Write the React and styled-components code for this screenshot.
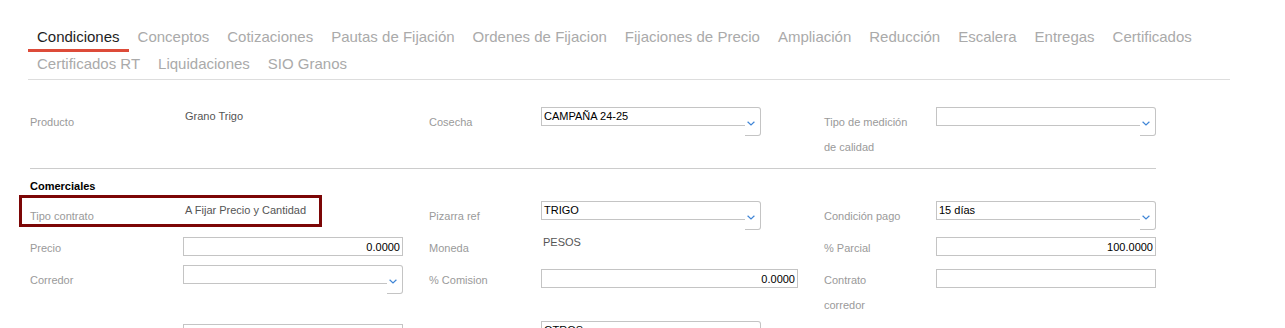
import React from 'react'
import styled, { createGlobalStyle } from 'styled-components'

const GlobalStyle = createGlobalStyle`
  body {
    margin: 0;
    background: #fff;
    font-family: 'Liberation Sans', Arial, sans-serif;
  }
`

const tabs = [
  'Condiciones',
  'Conceptos',
  'Cotizaciones',
  'Pautas de Fijación',
  'Ordenes de Fijacion',
  'Fijaciones de Precio',
  'Ampliación',
  'Reducción',
  'Escalera',
  'Entregas',
  'Certificados',
  'Certificados RT',
  'Liquidaciones',
  'SIO Granos',
]

const Chevron = () => (
  <svg width="8" height="5" viewBox="0 0 8 5">
    <polyline points="0.6,0.8 4,4 7.4,0.8" fill="none" stroke="#3f85d6" strokeWidth="1.2" />
  </svg>
)

const Select = ({ value }) => (
  <SelectBox>
    <SelectValue>{value}</SelectValue>
    <SelectArrow>
      <Chevron />
    </SelectArrow>
  </SelectBox>
)

const App = () => (
  <Page>
    <GlobalStyle />
    <TabBar>
      {tabs.map((t, i) => (
        <Tab key={t} $active={i === 0}>
          {t}
        </Tab>
      ))}
    </TabBar>

    <Form>
      <Row>
        <Label>Producto</Label>
        <Value>Grano Trigo</Value>
        <Label>Cosecha</Label>
        <Field>
          <Select value="CAMPAÑA 24-25" />
        </Field>
        <Label>
          Tipo de medición
          <br />
          de calidad
        </Label>
        <Field>
          <Select value="" />
        </Field>
      </Row>

      <Divider />
      <SectionTitle>Comerciales</SectionTitle>

      <Row>
        <Highlight />
        <Label>Tipo contrato</Label>
        <Value>A Fijar Precio y Cantidad</Value>
        <Label>Pizarra ref</Label>
        <Field>
          <Select value="TRIGO" />
        </Field>
        <Label>Condición pago</Label>
        <Field>
          <Select value="15 días" />
        </Field>
      </Row>

      <Row>
        <Label>Precio</Label>
        <Field>
          <TextInput readOnly value="0.0000" $align="right" />
        </Field>
        <Label>Moneda</Label>
        <Value>PESOS</Value>
        <Label>% Parcial</Label>
        <Field>
          <TextInput readOnly value="100.0000" $align="right" />
        </Field>
      </Row>

      <Row>
        <Label>Corredor</Label>
        <Field>
          <Select value="" />
        </Field>
        <Label>% Comision</Label>
        <Field>
          <TextInput readOnly value="0.0000" $align="right" $width={257} />
        </Field>
        <Label>
          Contrato
          <br />
          corredor
        </Label>
        <Field>
          <TextInput readOnly value="" />
        </Field>
      </Row>

      <Row>
        <Label />
        <Field>
          <TextInput readOnly value="" $top={3} />
        </Field>
        <Label />
        <Field>
          <Select value="OTROS" />
        </Field>
        <Label />
        <Field />
      </Row>
    </Form>
  </Page>
)

const Page = styled.div`
  padding-top: 25px;
  width: 1285px;
`

const TabBar = styled.nav`
  display: flex;
  flex-wrap: wrap;
  width: 1202px;
  margin-left: 28px;
  border-bottom: 1px solid #dddddd;
`

const Tab = styled.div`
  padding: 0 9px;
  font-size: 15px;
  line-height: 24px;
  color: ${(p) => (p.$active ? '#1e1e1e' : '#aaaaaa')};
  border-bottom: 3px solid ${(p) => (p.$active ? '#dd4b39' : 'transparent')};
  white-space: nowrap;
`

const Form = styled.div`
  padding: 27px 0 0 30px;
  width: 1126px;
`

const Row = styled.div`
  position: relative;
  display: grid;
  grid-template-columns: 153px 246px 112px 283px 112px 220px;
  align-items: start;
  min-height: 32px;
`

const Highlight = styled.div`
  position: absolute;
  left: -11px;
  top: -6px;
  width: 303px;
  height: 32px;
  box-sizing: border-box;
  border: 3px solid #7c0606;
  pointer-events: none;
`

const Label = styled.div`
  padding: 3px 0;
  font-size: 11px;
  line-height: 25px;
  color: #9a9a9a;
`

const Value = styled.div`
  padding: 1px 2px;
  font-size: 11px;
  line-height: 17px;
  color: #555555;
`

const Field = styled.div`
  display: flex;
`

const SelectBox = styled.div`
  display: flex;
  align-items: flex-start;
  width: 220px;
`

const SelectValue = styled.div`
  flex: 1;
  height: 19px;
  box-sizing: border-box;
  padding: 0 2px;
  border: 1px solid #c4c4c4;
  border-right: none;
  font-size: 11px;
  line-height: 17px;
  color: #000;
  white-space: nowrap;
  overflow: hidden;
`

const SelectArrow = styled.div`
  width: 16px;
  height: 29px;
  box-sizing: border-box;
  padding: 13px 0 0 2px;
  border: 1px solid #c4c4c4;
  border-left: none;
  border-radius: 0 3px 3px 0;
  display: flex;
  align-items: flex-start;
`

const TextInput = styled.input`
  margin: ${(p) => p.$top ?? 4}px 0 0;
  width: ${(p) => p.$width ?? 220}px;
  height: 19px;
  box-sizing: border-box;
  padding: 0 2px;
  border: 1px solid #c4c4c4;
  border-radius: 0;
  outline: none;
  font-family: 'Liberation Sans', Arial, sans-serif;
  font-size: 11px;
  color: #000;
  text-align: ${(p) => p.$align ?? 'left'};
  background: #fff;
`

const Divider = styled.hr`
  margin: 5px 0 0;
  border: none;
  border-top: 1px solid #cccccc;
  height: 0;
`

const SectionTitle = styled.div`
  margin: 10px 0 8px;
  font-size: 11px;
  line-height: 14px;
  font-weight: bold;
  color: #000;
`

export default App
